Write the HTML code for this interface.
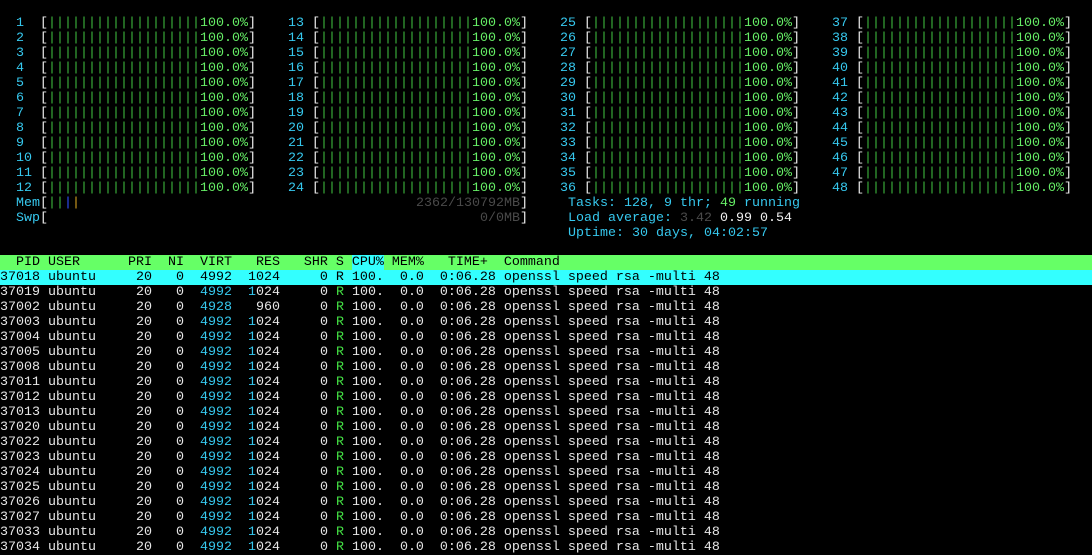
<!DOCTYPE html>
<html><head><meta charset="utf-8"><style>
body{margin:0;background:#000;width:1092px;height:552px;overflow:hidden;position:relative;font-family:"Liberation Mono",monospace;font-size:13.333px;line-height:15px;color:#e6e6e6}
.a{position:absolute;white-space:pre;height:15px;transform:translateY(1px)}
.c{color:#36c8ee}.w{color:#f0f0f0}.g{color:#3db83d}.p{color:#66ee66}.k{color:#4a4a4a}.b{color:#3050ff}.o{color:#d4a020}.r{color:#44e044}.gg{color:#66ee66}
.hd{position:absolute;left:0;top:255px;width:1092px;height:14px;padding-top:1px;line-height:14px;background:#66ff66;color:#000;white-space:pre}
.hd .cy{background:#33ffff;display:inline-block;height:15px;margin-top:-1px;padding-top:1px;vertical-align:top;box-sizing:border-box}
.sel{background:#33ffff;color:#000}
.pl{position:absolute;left:0;white-space:pre;width:1092px;height:14px;padding-top:1px;line-height:14px}
</style></head><body>
<div class="a" style="left:0;top:15px"><span class="c">  1  </span><span class="w">[</span><span class="g">|||||||||||||||||||</span><span class="p">100.0%</span><span class="w">]</span></div>
<div class="a" style="left:0;top:30px"><span class="c">  2  </span><span class="w">[</span><span class="g">|||||||||||||||||||</span><span class="p">100.0%</span><span class="w">]</span></div>
<div class="a" style="left:0;top:45px"><span class="c">  3  </span><span class="w">[</span><span class="g">|||||||||||||||||||</span><span class="p">100.0%</span><span class="w">]</span></div>
<div class="a" style="left:0;top:60px"><span class="c">  4  </span><span class="w">[</span><span class="g">|||||||||||||||||||</span><span class="p">100.0%</span><span class="w">]</span></div>
<div class="a" style="left:0;top:75px"><span class="c">  5  </span><span class="w">[</span><span class="g">|||||||||||||||||||</span><span class="p">100.0%</span><span class="w">]</span></div>
<div class="a" style="left:0;top:90px"><span class="c">  6  </span><span class="w">[</span><span class="g">|||||||||||||||||||</span><span class="p">100.0%</span><span class="w">]</span></div>
<div class="a" style="left:0;top:105px"><span class="c">  7  </span><span class="w">[</span><span class="g">|||||||||||||||||||</span><span class="p">100.0%</span><span class="w">]</span></div>
<div class="a" style="left:0;top:120px"><span class="c">  8  </span><span class="w">[</span><span class="g">|||||||||||||||||||</span><span class="p">100.0%</span><span class="w">]</span></div>
<div class="a" style="left:0;top:135px"><span class="c">  9  </span><span class="w">[</span><span class="g">|||||||||||||||||||</span><span class="p">100.0%</span><span class="w">]</span></div>
<div class="a" style="left:0;top:150px"><span class="c">  10 </span><span class="w">[</span><span class="g">|||||||||||||||||||</span><span class="p">100.0%</span><span class="w">]</span></div>
<div class="a" style="left:0;top:165px"><span class="c">  11 </span><span class="w">[</span><span class="g">|||||||||||||||||||</span><span class="p">100.0%</span><span class="w">]</span></div>
<div class="a" style="left:0;top:180px"><span class="c">  12 </span><span class="w">[</span><span class="g">|||||||||||||||||||</span><span class="p">100.0%</span><span class="w">]</span></div>
<div class="a" style="left:272px;top:15px"><span class="c">  13 </span><span class="w">[</span><span class="g">|||||||||||||||||||</span><span class="p">100.0%</span><span class="w">]</span></div>
<div class="a" style="left:272px;top:30px"><span class="c">  14 </span><span class="w">[</span><span class="g">|||||||||||||||||||</span><span class="p">100.0%</span><span class="w">]</span></div>
<div class="a" style="left:272px;top:45px"><span class="c">  15 </span><span class="w">[</span><span class="g">|||||||||||||||||||</span><span class="p">100.0%</span><span class="w">]</span></div>
<div class="a" style="left:272px;top:60px"><span class="c">  16 </span><span class="w">[</span><span class="g">|||||||||||||||||||</span><span class="p">100.0%</span><span class="w">]</span></div>
<div class="a" style="left:272px;top:75px"><span class="c">  17 </span><span class="w">[</span><span class="g">|||||||||||||||||||</span><span class="p">100.0%</span><span class="w">]</span></div>
<div class="a" style="left:272px;top:90px"><span class="c">  18 </span><span class="w">[</span><span class="g">|||||||||||||||||||</span><span class="p">100.0%</span><span class="w">]</span></div>
<div class="a" style="left:272px;top:105px"><span class="c">  19 </span><span class="w">[</span><span class="g">|||||||||||||||||||</span><span class="p">100.0%</span><span class="w">]</span></div>
<div class="a" style="left:272px;top:120px"><span class="c">  20 </span><span class="w">[</span><span class="g">|||||||||||||||||||</span><span class="p">100.0%</span><span class="w">]</span></div>
<div class="a" style="left:272px;top:135px"><span class="c">  21 </span><span class="w">[</span><span class="g">|||||||||||||||||||</span><span class="p">100.0%</span><span class="w">]</span></div>
<div class="a" style="left:272px;top:150px"><span class="c">  22 </span><span class="w">[</span><span class="g">|||||||||||||||||||</span><span class="p">100.0%</span><span class="w">]</span></div>
<div class="a" style="left:272px;top:165px"><span class="c">  23 </span><span class="w">[</span><span class="g">|||||||||||||||||||</span><span class="p">100.0%</span><span class="w">]</span></div>
<div class="a" style="left:272px;top:180px"><span class="c">  24 </span><span class="w">[</span><span class="g">|||||||||||||||||||</span><span class="p">100.0%</span><span class="w">]</span></div>
<div class="a" style="left:544px;top:15px"><span class="c">  25 </span><span class="w">[</span><span class="g">|||||||||||||||||||</span><span class="p">100.0%</span><span class="w">]</span></div>
<div class="a" style="left:544px;top:30px"><span class="c">  26 </span><span class="w">[</span><span class="g">|||||||||||||||||||</span><span class="p">100.0%</span><span class="w">]</span></div>
<div class="a" style="left:544px;top:45px"><span class="c">  27 </span><span class="w">[</span><span class="g">|||||||||||||||||||</span><span class="p">100.0%</span><span class="w">]</span></div>
<div class="a" style="left:544px;top:60px"><span class="c">  28 </span><span class="w">[</span><span class="g">|||||||||||||||||||</span><span class="p">100.0%</span><span class="w">]</span></div>
<div class="a" style="left:544px;top:75px"><span class="c">  29 </span><span class="w">[</span><span class="g">|||||||||||||||||||</span><span class="p">100.0%</span><span class="w">]</span></div>
<div class="a" style="left:544px;top:90px"><span class="c">  30 </span><span class="w">[</span><span class="g">|||||||||||||||||||</span><span class="p">100.0%</span><span class="w">]</span></div>
<div class="a" style="left:544px;top:105px"><span class="c">  31 </span><span class="w">[</span><span class="g">|||||||||||||||||||</span><span class="p">100.0%</span><span class="w">]</span></div>
<div class="a" style="left:544px;top:120px"><span class="c">  32 </span><span class="w">[</span><span class="g">|||||||||||||||||||</span><span class="p">100.0%</span><span class="w">]</span></div>
<div class="a" style="left:544px;top:135px"><span class="c">  33 </span><span class="w">[</span><span class="g">|||||||||||||||||||</span><span class="p">100.0%</span><span class="w">]</span></div>
<div class="a" style="left:544px;top:150px"><span class="c">  34 </span><span class="w">[</span><span class="g">|||||||||||||||||||</span><span class="p">100.0%</span><span class="w">]</span></div>
<div class="a" style="left:544px;top:165px"><span class="c">  35 </span><span class="w">[</span><span class="g">|||||||||||||||||||</span><span class="p">100.0%</span><span class="w">]</span></div>
<div class="a" style="left:544px;top:180px"><span class="c">  36 </span><span class="w">[</span><span class="g">|||||||||||||||||||</span><span class="p">100.0%</span><span class="w">]</span></div>
<div class="a" style="left:816px;top:15px"><span class="c">  37 </span><span class="w">[</span><span class="g">|||||||||||||||||||</span><span class="p">100.0%</span><span class="w">]</span></div>
<div class="a" style="left:816px;top:30px"><span class="c">  38 </span><span class="w">[</span><span class="g">|||||||||||||||||||</span><span class="p">100.0%</span><span class="w">]</span></div>
<div class="a" style="left:816px;top:45px"><span class="c">  39 </span><span class="w">[</span><span class="g">|||||||||||||||||||</span><span class="p">100.0%</span><span class="w">]</span></div>
<div class="a" style="left:816px;top:60px"><span class="c">  40 </span><span class="w">[</span><span class="g">|||||||||||||||||||</span><span class="p">100.0%</span><span class="w">]</span></div>
<div class="a" style="left:816px;top:75px"><span class="c">  41 </span><span class="w">[</span><span class="g">|||||||||||||||||||</span><span class="p">100.0%</span><span class="w">]</span></div>
<div class="a" style="left:816px;top:90px"><span class="c">  42 </span><span class="w">[</span><span class="g">|||||||||||||||||||</span><span class="p">100.0%</span><span class="w">]</span></div>
<div class="a" style="left:816px;top:105px"><span class="c">  43 </span><span class="w">[</span><span class="g">|||||||||||||||||||</span><span class="p">100.0%</span><span class="w">]</span></div>
<div class="a" style="left:816px;top:120px"><span class="c">  44 </span><span class="w">[</span><span class="g">|||||||||||||||||||</span><span class="p">100.0%</span><span class="w">]</span></div>
<div class="a" style="left:816px;top:135px"><span class="c">  45 </span><span class="w">[</span><span class="g">|||||||||||||||||||</span><span class="p">100.0%</span><span class="w">]</span></div>
<div class="a" style="left:816px;top:150px"><span class="c">  46 </span><span class="w">[</span><span class="g">|||||||||||||||||||</span><span class="p">100.0%</span><span class="w">]</span></div>
<div class="a" style="left:816px;top:165px"><span class="c">  47 </span><span class="w">[</span><span class="g">|||||||||||||||||||</span><span class="p">100.0%</span><span class="w">]</span></div>
<div class="a" style="left:816px;top:180px"><span class="c">  48 </span><span class="w">[</span><span class="g">|||||||||||||||||||</span><span class="p">100.0%</span><span class="w">]</span></div>

<div class="a" style="left:16px;top:195px"><span class="c">Mem</span><span class="w">[</span><span class="g">||</span><span class="b">|</span><span class="o">|</span></div>
<div class="a" style="left:416px;top:195px"><span class="k">2362/130792MB</span><span class="w">]</span></div>
<div class="a" style="left:16px;top:210px"><span class="c">Swp</span><span class="w">[</span></div>
<div class="a" style="left:480px;top:210px"><span class="k">0/0MB</span><span class="w">]</span></div>

<div class="a" style="left:568px;top:195px"><span class="c">Tasks: 128, 9 thr; </span><span class="gg">49</span><span class="c"> running</span></div>
<div class="a" style="left:568px;top:210px"><span class="c">Load average: </span><span class="k">3.42</span><span class="w"> 0.99 0.54</span></div>
<div class="a" style="left:568px;top:225px"><span class="c">Uptime: 30 days, 04:02:57</span></div>

<div class="hd">  PID USER      PRI  NI  VIRT   RES   SHR S <span class="cy">CPU%</span> MEM%   TIME+  Command</div>

<div class="pl sel" style="top:270px">37018 ubuntu     20   0  4992  1024     0 R 100.  0.0  0:06.28 openssl speed rsa -multi 48</div>
<div class="pl" style="top:285px">37019 ubuntu     20   0  <span class="c">4992</span>  <span class="c">1</span>024     0 <span class="r">R</span> 100.  0.0  0:06.28 openssl speed rsa -multi 48</div>
<div class="pl" style="top:300px">37002 ubuntu     20   0  <span class="c">4928</span>   960     0 <span class="r">R</span> 100.  0.0  0:06.28 openssl speed rsa -multi 48</div>
<div class="pl" style="top:315px">37003 ubuntu     20   0  <span class="c">4992</span>  <span class="c">1</span>024     0 <span class="r">R</span> 100.  0.0  0:06.28 openssl speed rsa -multi 48</div>
<div class="pl" style="top:330px">37004 ubuntu     20   0  <span class="c">4992</span>  <span class="c">1</span>024     0 <span class="r">R</span> 100.  0.0  0:06.28 openssl speed rsa -multi 48</div>
<div class="pl" style="top:345px">37005 ubuntu     20   0  <span class="c">4992</span>  <span class="c">1</span>024     0 <span class="r">R</span> 100.  0.0  0:06.28 openssl speed rsa -multi 48</div>
<div class="pl" style="top:360px">37008 ubuntu     20   0  <span class="c">4992</span>  <span class="c">1</span>024     0 <span class="r">R</span> 100.  0.0  0:06.28 openssl speed rsa -multi 48</div>
<div class="pl" style="top:375px">37011 ubuntu     20   0  <span class="c">4992</span>  <span class="c">1</span>024     0 <span class="r">R</span> 100.  0.0  0:06.28 openssl speed rsa -multi 48</div>
<div class="pl" style="top:390px">37012 ubuntu     20   0  <span class="c">4992</span>  <span class="c">1</span>024     0 <span class="r">R</span> 100.  0.0  0:06.28 openssl speed rsa -multi 48</div>
<div class="pl" style="top:405px">37013 ubuntu     20   0  <span class="c">4992</span>  <span class="c">1</span>024     0 <span class="r">R</span> 100.  0.0  0:06.28 openssl speed rsa -multi 48</div>
<div class="pl" style="top:420px">37020 ubuntu     20   0  <span class="c">4992</span>  <span class="c">1</span>024     0 <span class="r">R</span> 100.  0.0  0:06.28 openssl speed rsa -multi 48</div>
<div class="pl" style="top:435px">37022 ubuntu     20   0  <span class="c">4992</span>  <span class="c">1</span>024     0 <span class="r">R</span> 100.  0.0  0:06.28 openssl speed rsa -multi 48</div>
<div class="pl" style="top:450px">37023 ubuntu     20   0  <span class="c">4992</span>  <span class="c">1</span>024     0 <span class="r">R</span> 100.  0.0  0:06.28 openssl speed rsa -multi 48</div>
<div class="pl" style="top:465px">37024 ubuntu     20   0  <span class="c">4992</span>  <span class="c">1</span>024     0 <span class="r">R</span> 100.  0.0  0:06.28 openssl speed rsa -multi 48</div>
<div class="pl" style="top:480px">37025 ubuntu     20   0  <span class="c">4992</span>  <span class="c">1</span>024     0 <span class="r">R</span> 100.  0.0  0:06.28 openssl speed rsa -multi 48</div>
<div class="pl" style="top:495px">37026 ubuntu     20   0  <span class="c">4992</span>  <span class="c">1</span>024     0 <span class="r">R</span> 100.  0.0  0:06.28 openssl speed rsa -multi 48</div>
<div class="pl" style="top:510px">37027 ubuntu     20   0  <span class="c">4992</span>  <span class="c">1</span>024     0 <span class="r">R</span> 100.  0.0  0:06.28 openssl speed rsa -multi 48</div>
<div class="pl" style="top:525px">37033 ubuntu     20   0  <span class="c">4992</span>  <span class="c">1</span>024     0 <span class="r">R</span> 100.  0.0  0:06.28 openssl speed rsa -multi 48</div>
<div class="pl" style="top:540px">37034 ubuntu     20   0  <span class="c">4992</span>  <span class="c">1</span>024     0 <span class="r">R</span> 100.  0.0  0:06.28 openssl speed rsa -multi 48</div>
</body></html>
